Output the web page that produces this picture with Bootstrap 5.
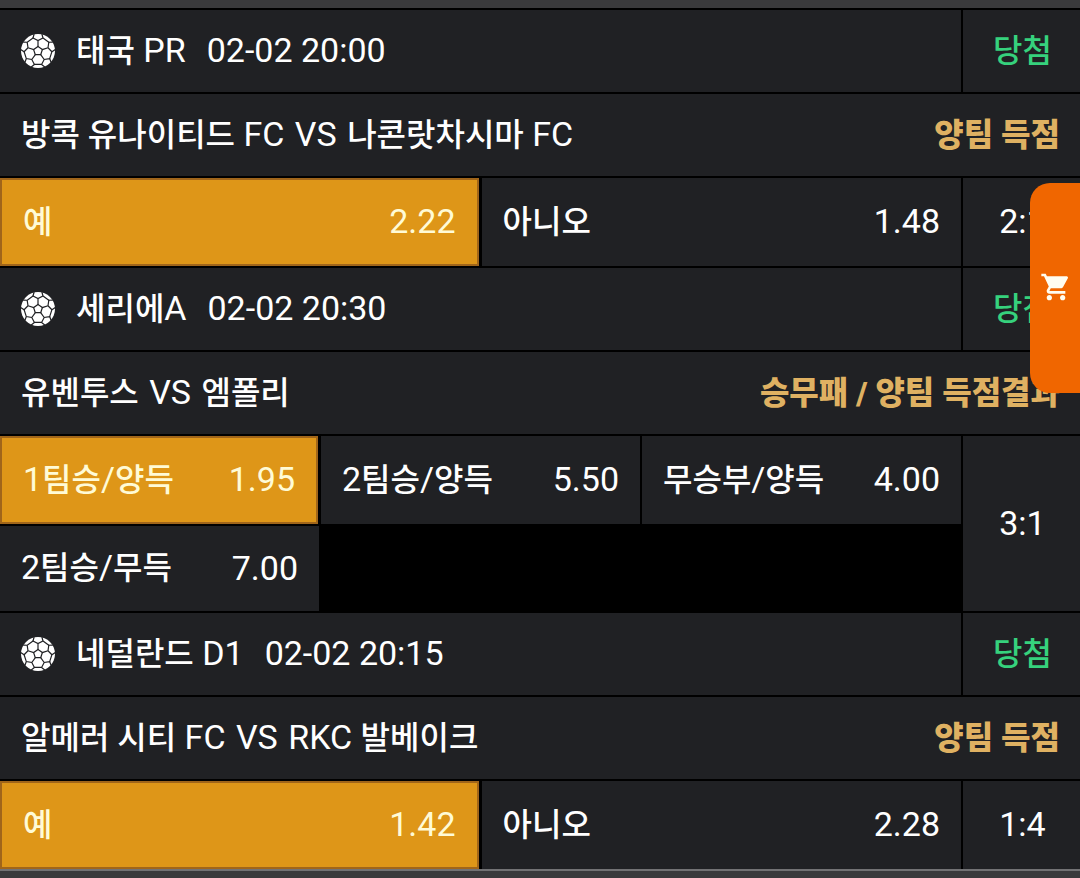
<!DOCTYPE html>
<html lang="ko">
<head>
<meta charset="utf-8">
<meta name="viewport" content="width=device-width, initial-scale=1">
<title>베팅 내역</title>
<link href="https://cdn.jsdelivr.net/npm/bootstrap@5.3.0/dist/css/bootstrap.min.css" rel="stylesheet">
<style>
body { background: #3a3a3c; color: #fff; font: 34px/40px Roboto, "Noto Sans CJK KR", sans-serif; }
.ko { font-size: 32px; font-weight: 500; }
.slip { margin-top: 8px; background: #000; border-bottom: 2px solid #727274; padding-top: 2px; display: grid; gap: 2px; }
.pair { display: grid; grid-template-columns: minmax(0, 1fr) 117px; gap: 2px; }
.cell { background: #202124; min-height: 82px; padding: 0 21px 2px; display: flex; align-items: center; white-space: pre; }
.side { justify-content: center; padding: 0 0 2px 2px; }
.won { color: #36d27d; }
.match { justify-content: space-between; padding-right: 20px; }
.market { color: #dfb162; font-weight: 900; }
.vs { margin: 0 2px; }
.odds { display: grid; grid-template-columns: repeat(2, minmax(0, 1fr)); grid-template-rows: 88px; grid-auto-rows: 85px; gap: 2px; }
.odds.three { grid-template-columns: repeat(3, minmax(0, 1fr)); }
.pick { border: 0; color: inherit; justify-content: space-between; }
.pick.chosen { background: #de9618; border: 2px solid #a0651a; color: #fffbd6; margin-right: 1px; }
.ball { width: 34px; height: 34px; margin: 2px 21px 0 0; flex: none; }
.when { margin-left: 21px; }
.cart { position: absolute; top: 183px; right: 0; width: 50px; height: 210px; padding: 0 0 2px 2px; border: 0; border-radius: 20px 0 0 20px; background: #f06600; }
</style>
</head>
<body>
<svg class="d-none">
  <symbol id="ball" viewBox="-17 -17 34 34">
    <circle r="17" fill="#fff"/>
    <g fill="none" stroke="#202124" stroke-width="1.2" stroke-linecap="round">
      <path id="seam" d="M4.370 -1.420L0 -4.600V-10.500M-5 -13L0 -10.500L5 -13L10.800 -8.750M-5 -13L-4 -16.500M5 -13L4 -16.500"/>
      <use href="#seam" transform="rotate(72)"/>
      <use href="#seam" transform="rotate(144)"/>
      <use href="#seam" transform="rotate(216)"/>
      <use href="#seam" transform="rotate(288)"/>
    </g>
  </symbol>
</svg>
<main class="slip">
  <div class="pair">
    <div class="cell"><svg class="ball" aria-hidden="true"><use href="#ball"/></svg><span><span class="ko">태국</span> PR</span><time class="when">02-02 20:00</time></div>
    <div class="cell side won"><span><span class="ko">당첨</span></span></div>
  </div>
  <div class="cell match"><span><span class="ko">방콕 유나이티드</span> FC <span class="vs">VS</span> <span class="ko">나콘랏차시마</span> FC</span><span><span class="ko market">양팀 득점</span></span></div>
  <div class="pair">
    <div class="odds">
      <button type="button" class="cell pick chosen"><span><span class="ko">예</span></span><span>2.22</span></button>
      <button type="button" class="cell pick"><span><span class="ko">아니오</span></span><span>1.48</span></button>
    </div>
    <div class="cell side">2:1</div>
  </div>
  <div class="pair">
    <div class="cell"><svg class="ball" aria-hidden="true"><use href="#ball"/></svg><span><span class="ko">세리에</span>A</span><time class="when">02-02 20:30</time></div>
    <div class="cell side won"><span><span class="ko">당첨</span></span></div>
  </div>
  <div class="cell match"><span><span class="ko">유벤투스</span> <span class="vs">VS</span> <span class="ko">엠폴리</span></span><span><span class="ko market">승무패 / 양팀 득점결과</span></span></div>
  <div class="pair">
    <div class="odds three">
      <button type="button" class="cell pick chosen"><span>1<span class="ko">팀승</span>/<span class="ko">양득</span></span><span>1.95</span></button>
      <button type="button" class="cell pick"><span>2<span class="ko">팀승</span>/<span class="ko">양득</span></span><span>5.50</span></button>
      <button type="button" class="cell pick"><span><span class="ko">무승부</span>/<span class="ko">양득</span></span><span>4.00</span></button>
      <button type="button" class="cell pick"><span>2<span class="ko">팀승</span>/<span class="ko">무득</span></span><span>7.00</span></button>
    </div>
    <div class="cell side">3:1</div>
  </div>
  <div class="pair">
    <div class="cell"><svg class="ball" aria-hidden="true"><use href="#ball"/></svg><span><span class="ko">네덜란드</span> D1</span><time class="when">02-02 20:15</time></div>
    <div class="cell side won"><span><span class="ko">당첨</span></span></div>
  </div>
  <div class="cell match"><span><span class="ko">알메러 시티</span> FC <span class="vs">VS</span> RKC <span class="ko">발베이크</span></span><span><span class="ko market">양팀 득점</span></span></div>
  <div class="pair">
    <div class="odds">
      <button type="button" class="cell pick chosen"><span><span class="ko">예</span></span><span>1.42</span></button>
      <button type="button" class="cell pick"><span><span class="ko">아니오</span></span><span>2.28</span></button>
    </div>
    <div class="cell side">1:4</div>
  </div>
</main>
<button type="button" class="cart d-flex align-items-center justify-content-center" aria-label="장바구니">
  <svg width="32" height="32" viewBox="0 0 24 24" fill="#fffdf0" aria-hidden="true"><path d="M7 18c-1.100 0-1.990.9-1.990 2S5.900 22 7 22s2-.9 2-2-.9-2-2-2zM1 2v2h2l3.600 7.590-1.350 2.450c-.16.280-.25.610-.25.960 0 1.100.9 2 2 2h12v-2H7.420c-.14 0-.25-.11-.25-.25l.03-.12.9-1.630h7.450c.75 0 1.410-.41 1.750-1.030l3.580-6.490A1 1 0 0 0 20 4H5.210l-.94-2H1zm16 16c-1.100 0-1.990.9-1.990 2s.89 2 1.990 2 2-.9 2-2-.9-2-2-2z"/></svg>
</button>
<script src="https://cdn.jsdelivr.net/npm/bootstrap@5.3.0/dist/js/bootstrap.bundle.min.js"></script>
</body>
</html>
